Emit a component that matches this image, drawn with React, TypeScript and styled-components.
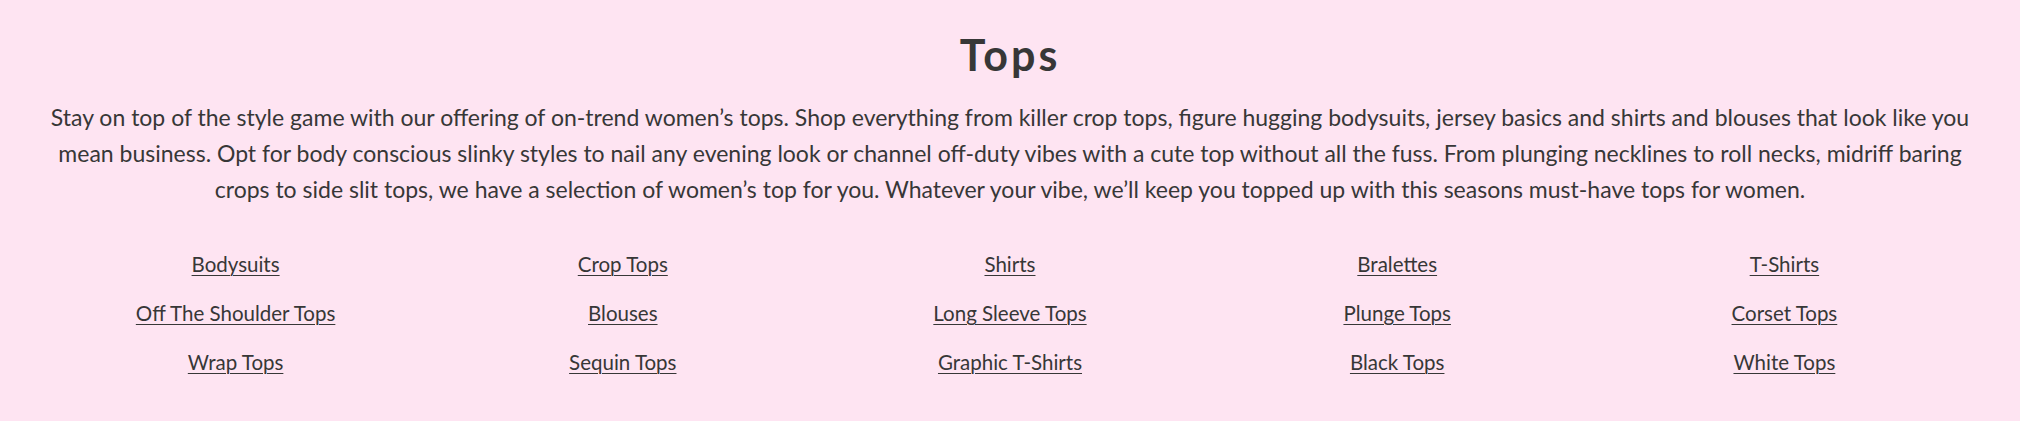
import React from 'react';
import styled, { createGlobalStyle } from 'styled-components';

const GlobalStyle = createGlobalStyle`
  html, body {
    margin: 0;
    padding: 0;
    background: #fee4f2;
  }
`;

const Section = styled.section`
  box-sizing: border-box;
  width: 2020px;
  height: 421px;
  padding: 28px 42px 0;
  background: #fee4f2;
  color: #373737;
  font-family: Lato, "Open Sans", sans-serif;
  text-align: center;
`;

const Title = styled.h1`
  margin: 0;
  font-size: 43px;
  line-height: 54px;
  font-weight: 700;
  letter-spacing: 3px;
`;

const Intro = styled.p`
  margin: 17px 0 0;
  font-size: 23px;
  line-height: 36px;
  font-weight: 400;
`;

const LinkGrid = styled.ul`
  list-style: none;
  margin: 32px 0 0;
  padding: 0;
  display: grid;
  grid-template-columns: repeat(5, 1fr);
  grid-auto-rows: 49px;
`;

const LinkItem = styled.li`
  display: flex;
  justify-content: center;
  align-items: center;
`;

const CategoryLink = styled.a`
  color: #373737;
  font-size: 20.5px;
  text-decoration: underline;
  text-underline-offset: 3px;
  text-decoration-thickness: 1px;
`;

const categories = [
  'Bodysuits', 'Crop Tops', 'Shirts', 'Bralettes', 'T-Shirts',
  'Off The Shoulder Tops', 'Blouses', 'Long Sleeve Tops', 'Plunge Tops', 'Corset Tops',
  'Wrap Tops', 'Sequin Tops', 'Graphic T-Shirts', 'Black Tops', 'White Tops',
];

export default function App() {
  return (
    <>
      <GlobalStyle />
      <Section>
        <Title>Tops</Title>
        <Intro>
          Stay on top of the style game with our offering of on-trend women’s tops. Shop everything from killer crop tops,
          figure hugging bodysuits, jersey basics and shirts and blouses that look like you mean business. Opt for body
          conscious slinky styles to nail any evening look or channel off-duty vibes with a cute top without all the fuss.
          From plunging necklines to roll necks, midriff baring crops to side slit tops, we have a selection of women’s top
          for you. Whatever your vibe, we’ll keep you topped up with this seasons must-have tops for women.
        </Intro>
        <LinkGrid>
          {categories.map((name) => (
            <LinkItem key={name}>
              <CategoryLink href="#">{name}</CategoryLink>
            </LinkItem>
          ))}
        </LinkGrid>
      </Section>
    </>
  );
}
